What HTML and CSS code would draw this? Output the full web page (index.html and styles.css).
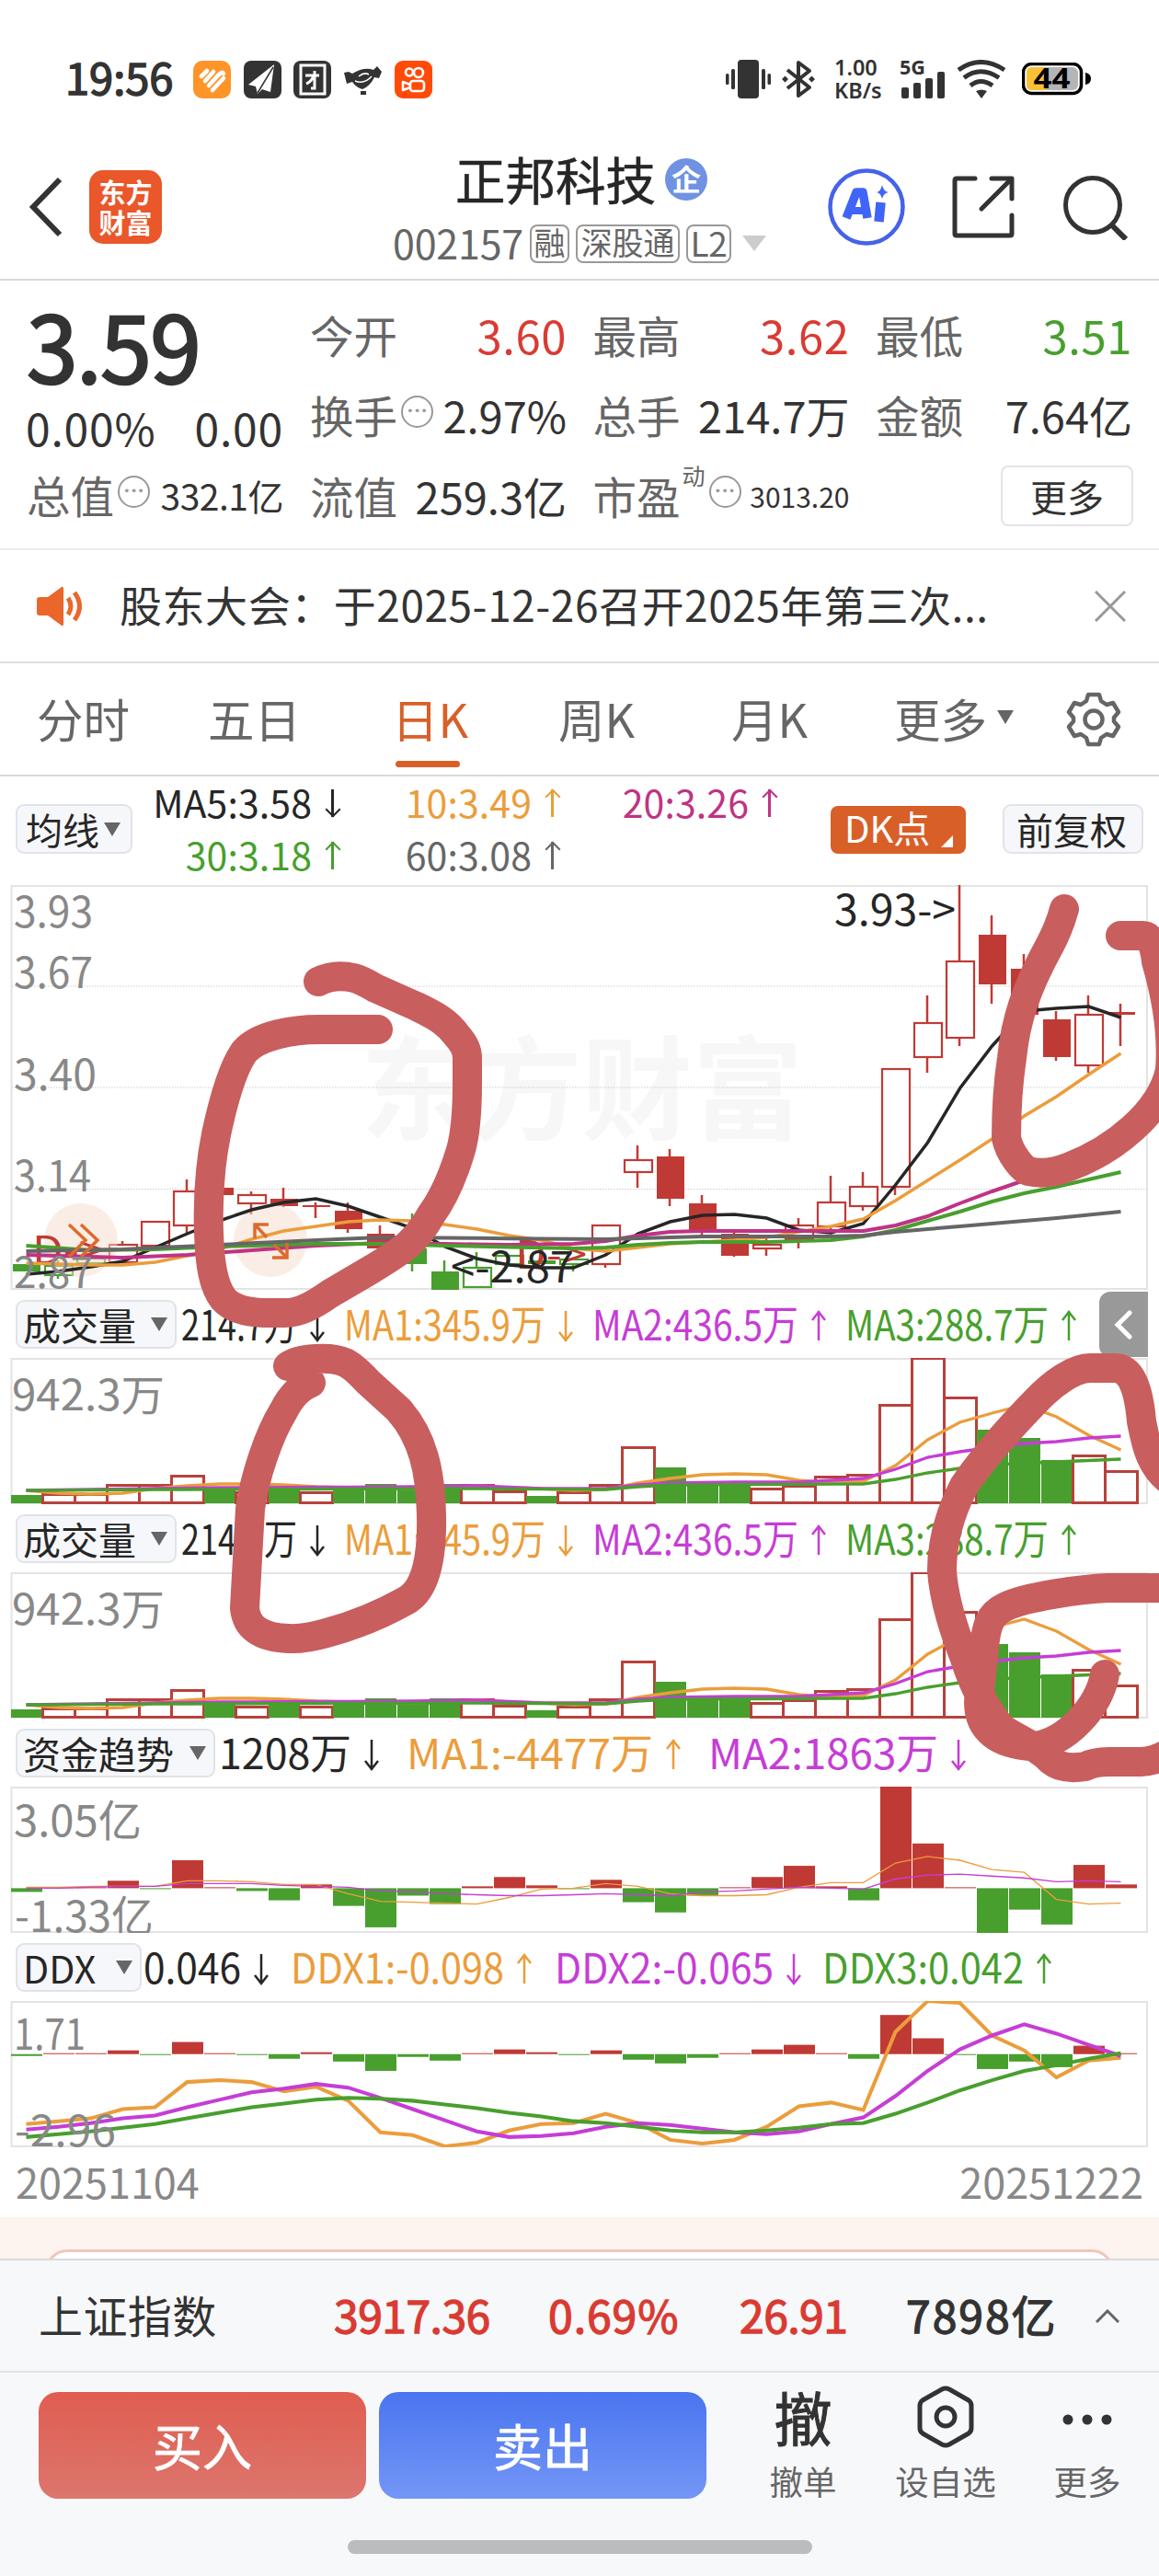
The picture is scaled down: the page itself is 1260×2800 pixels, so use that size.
FILE: index.html
```html
<!DOCTYPE html>
<html lang="zh-CN">
<head>
    <meta charset="UTF-8">
    <meta name="viewport" content="width=device-width, initial-scale=1.0">
    <title>正邦科技 002157</title>
    <link rel="stylesheet" href="styles.css">
</head>
<body>
<div class="page">
    <!-- status bar -->
    <div class="status">
        <span class="clock">19:56</span>
        <div class="status-apps">
            <svg class="app" viewBox="0 0 41 41"><rect width="41" height="41" rx="10" fill="#ff9429"/><g stroke="#fff" stroke-width="4.6" stroke-linecap="round" fill="none"><path d="M9 17 L15 11"/><path d="M13 22 L22 12"/><path d="M17 27 L27 16 Q32 11 33 14"/><path d="M21 32 L33 19"/></g></svg>
            <svg class="app" viewBox="0 0 41 41"><rect width="41" height="41" rx="8" fill="#333"/><path d="M33 4 L5 26 L13 28 L15 36 L20 31 L29 34 Z" fill="#fff"/><path d="M32 7 L15 35" stroke="#333" stroke-width="1.5"/></svg>
            <svg class="app" viewBox="0 0 41 41"><rect width="41" height="41" rx="8" fill="#333"/><rect x="8" y="5" width="26" height="31" fill="none" stroke="#fff" stroke-width="3"/><path d="M13 16 H28 M23 11 V30 H19 M22 17 Q19 23 14 25" fill="none" stroke="#fff" stroke-width="3"/></svg>
            <svg class="app" viewBox="0 0 41 41"><path d="M0 13 L5 12 L9 14 Q22 6 32 10 L36 6 L41 12 L38 19 L33 18 Q28 28 20 31 Q13 29 9 23 L3 25 Z M18 33 H24 V37 H18 Z" fill="#333"/><path d="M16 17 Q22 12 27 15 M12 22 Q22 26 30 17" fill="none" stroke="#fff" stroke-width="1.5"/></svg>
            <svg class="app" viewBox="0 0 41 41"><rect width="41" height="41" rx="9" fill="#ff4a08"/><g fill="none" stroke="#fff" stroke-width="2.6"><circle cx="16" cy="12.500" r="4"/><circle cx="26" cy="13" r="5"/><rect x="17" y="22" width="15" height="11" rx="3"/><path d="M17 26 L9 23 V32 L17 29" stroke-linejoin="round"/></g></svg>
        </div>
        <div class="status-right">
            <svg width="50" height="42" viewBox="0 0 50 42" fill="#333"><rect x="13" width="23" height="42" rx="4"/><rect x="6" y="10" width="4" height="22" rx="1.500"/><rect y="15" width="3.500" height="12" rx="1.500"/><rect x="39" y="10" width="4" height="22" rx="1.500"/><rect x="45.500" y="15" width="3.500" height="12" rx="1.500"/></svg>
            <svg class="bt" width="36" height="42" viewBox="0 0 36 42" fill="none" stroke="#333" stroke-width="4"><path d="M6 11 L30 30 L18 39 V3 L30 12 L6 31" stroke-linejoin="round"/><path d="M0 21 L3.500 17.500 L7 21 L3.500 24.500 Z M29 21 L32.500 17.500 L36 21 L32.500 24.500 Z" fill="#333" stroke="none"/></svg>
            <span class="speed">1.00<br>KB/s</span>
            <svg class="signal" width="50" height="42" viewBox="0 0 50 42" fill="#333"><text x="0" y="16" textLength="28" lengthAdjust="spacingAndGlyphs" class="sig-text">5G</text><rect x="2" y="30" width="8" height="12" rx="2"/><rect x="15" y="25" width="8" height="17" rx="2"/><rect x="28" y="20" width="8" height="22" rx="2"/><rect x="41" y="13" width="8" height="29" rx="2"/></svg>
            <svg class="wifi" width="54" height="42" viewBox="0 0 54 42" fill="none" stroke="#333" stroke-width="5"><path d="M2 11 Q26 -6 52 11"/><path d="M8 19.500 Q26 6 46 19.500"/><path d="M15 28 Q26 19 39 28"/><path d="M21 34 Q27 31 33 34 L27 42 Z" fill="#333" stroke="none"/></svg>
            <svg class="battery" width="75" height="36" viewBox="0 0 75 36"><rect x="1.500" y="1.500" width="63" height="32" rx="9" fill="#fff" stroke="#000" stroke-width="3.500"/><rect x="5" y="5" width="56" height="25" rx="6" fill="#b5b5b5"/><path d="M11 5 H27 V30 H11 Q5 30 5 24 V11 Q5 5 11 5 Z" fill="#f8c236"/><path d="M69 11 Q75 12 75 17.500 Q75 23 69 24 Z" fill="#000"/><text x="12.500" y="28" textLength="40" lengthAdjust="spacingAndGlyphs" class="bat-text">44</text></svg>
        </div>
    </div>

    <!-- title -->
    <header class="header">
        <div class="header-left">
            <svg width="40" height="66" viewBox="0 0 40 66"><path d="M35 3 L6 33 L35 63" fill="none" stroke="#333" stroke-width="6"/></svg>
            <div class="logo">东方<br>财富</div>
        </div>
        <div class="header-title">
            <div class="name">正邦科技<span class="badge">企</span></div>
            <div class="code">002157<span class="tag t1">融</span><span class="tag t3">深股通</span><span class="tag t2">L2</span><i class="tri-down"></i></div>
        </div>
        <div class="header-right">
            <svg class="ai" width="84" height="84" viewBox="0 0 84 84"><circle cx="42" cy="42" r="39.500" fill="none" stroke="#4562ea" stroke-width="4.500"/><path d="M20 54 L31 26 H38 L43 54" fill="none" stroke="#4164f8" stroke-width="9.500" stroke-linejoin="round"/><path d="M26 46 H41" stroke="#4164f8" stroke-width="8"/><path d="M57.500 37 L55.500 58" stroke="#4164f8" stroke-width="10.500"/><path d="M59 18 Q60.500 25 66 26 Q60.500 27 59 33 Q57.500 27 53 26 Q57.500 25 59 18 Z" fill="#4164f8"/></svg>
            <svg width="68" height="68" viewBox="0 0 68 68" fill="none" stroke="#333" stroke-width="5" stroke-linecap="round" stroke-linejoin="round"><path d="M25 3 H5 Q3 3 3 5 V63 Q3 65 5 65 H63 Q65 65 65 63 V43"/><path d="M43 3 H65 V25"/><path d="M64 4 L32 36"/></svg>
            <svg width="70" height="72" viewBox="0 0 70 72" fill="none" stroke="#333" stroke-width="5"><circle cx="32" cy="34" r="29.500"/><path d="M52 55 L68 71" stroke-width="6"/></svg>
        </div>
    </header>

    <!-- quote -->
    <section class="quote">
        <div class="quote-main">
            <div class="price">3.59</div>
            <div class="change"><span>0.00%</span><span>0.00</span></div>
            <div class="cell cap"><label>总值</label><i class="dots">•••</i><b class="sm">332.1亿</b></div>
        </div>
        <div class="quote-grid">
            <div class="cell"><label>今开</label><b class="red">3.60</b></div>
            <div class="cell"><label>最高</label><b class="red">3.62</b></div>
            <div class="cell"><label>最低</label><b class="green">3.51</b></div>
            <div class="cell"><label>换手</label><i class="dots">•••</i><b>2.97%</b></div>
            <div class="cell"><label>总手</label><b>214.7万</b></div>
            <div class="cell"><label>金额</label><b>7.64亿</b></div>
            <div class="cell"><label>流值</label><b>259.3亿</b></div>
            <div class="cell"><label>市盈</label><sup>动</sup><i class="dots">•••</i><b class="xs">3013.20</b></div>
            <div class="cell"><button class="more">更多</button></div>
        </div>
    </section>

    <div class="notice">
        <svg width="52" height="44" viewBox="0 0 52 44"><path d="M3 12 H12 L27 1 Q29 0 29 3 V41 Q29 44 27 43 L12 32 H3 Q0 32 0 29 V15 Q0 12 3 12 Z" fill="#eb662b"/><path d="M34 13 Q40 22 34 31 M41 7 Q52 22 41 37" fill="none" stroke="#eb662b" stroke-width="5"/></svg>
        <p>股东大会：于2025-12-26召开2025年第三次...</p>
        <svg width="34" height="34" viewBox="0 0 34 34"><path d="M1 1 L33 33 M33 1 L1 33" stroke="#999" stroke-width="3"/></svg>
    </div>

    <nav class="tabs">
        <a>分时</a><a>五日</a><a class="active">日K</a><a>周K</a><a>月K</a><a>更多<i class="tri"></i></a>
        <svg width="60" height="60" viewBox="0 0 60 60" fill="none" stroke="#666" stroke-width="4.500" stroke-linejoin="round"><path d="M24 3 H36 L38 10 L44 14 L51 12 L57 22 L52 28 V32 L57 38 L51 48 L44 46 L38 50 L36 57 H24 L22 50 L16 46 L9 48 L3 38 L8 32 V28 L3 22 L9 12 L16 14 L22 10 Z"/><circle cx="30" cy="30" r="9.500"/></svg>
    </nav>

    <div class="ma-bar">
        <span class="chip left">均线<i class="tri"></i></span>
        <div class="ma-list">
            <span class="c-dark">MA5:3.58<i class="arr down"></i></span>
            <span class="c-orange">10:3.49<i class="arr up"></i></span>
            <span class="c-pink">20:3.26<i class="arr up"></i></span>
            <span class="c-green">30:3.18<i class="arr up"></i></span>
            <span class="c-gray">60:3.08<i class="arr up"></i></span>
        </div>
        <span class="dk">DK点<i></i></span>
        <span class="chip right">前复权</span>
    </div>

    <!-- charts -->
    <svg class="chart" id="kline" height="440" viewBox="0 962 1260 440"></svg>

    <div class="ind-head">
        <span class="chip w175">成交量<i class="tri"></i></span>
        <svg class="vals" data-vals="199,123,dark,214.7万,down|376,216,orange,MA1:345.9万,down|646,221,purple,MA2:436.5万,up|921,218,green,MA3:288.7万,up"></svg>
        <span class="side"><svg width="20" height="32" viewBox="0 0 20 32"><path d="M17 3 L4 16 L17 29" fill="none" stroke="#fff" stroke-width="5" stroke-linecap="round"/></svg></span>
    </div>
    <svg class="chart" id="vol1" height="159" viewBox="0 1476 1260 159"></svg>

    <div class="ind-head">
        <span class="chip w175">成交量<i class="tri"></i></span>
        <svg class="vals" data-vals="199,123,dark,214.7万,down|376,216,orange,MA1:345.9万,down|646,221,purple,MA2:436.5万,up|921,218,green,MA3:288.7万,up"></svg>
    </div>
    <svg class="chart" id="vol2" height="159" viewBox="0 1476 1260 159"></svg>

    <div class="ind-head">
        <span class="chip w217">资金趋势<i class="tri"></i></span>
        <svg class="vals" data-vals="240,141,dark,1208万,down|444,265,orange,MA1:-4477万,up|772,247,purple,MA2:1863万,down"></svg>
    </div>
    <svg class="chart" id="fund" height="159" viewBox="0 1941 1260 157" preserveAspectRatio="none"></svg>

    <div class="ind-head">
        <span class="chip w137">DDX<i class="tri"></i></span>
        <svg class="vals" data-vals="158,103,dark,0.046,down|318,229,orange,DDX1:-0.098,up|605,235,purple,DDX2:-0.065,down|896,216,green,DDX3:0.042,up"></svg>
    </div>
    <svg class="chart" id="ddx" height="159" viewBox="0 2171 1260 157" preserveAspectRatio="none"></svg>

    <div class="dates"><span>20251104</span><span>20251222</span></div>
    <div class="promo"><div class="promo-card"></div></div>

    <!-- bottom -->
    <div class="index-row">
        <span class="idx-name">上证指数</span>
        <span class="idx red i1">3917.36</span>
        <span class="idx red i2">0.69%</span>
        <span class="idx red i3">26.91</span>
        <span class="idx i4">7898亿</span>
        <svg width="26" height="15" viewBox="0 0 26 15"><path d="M1 14 L13 2 L25 14" fill="none" stroke="#666" stroke-width="3"/></svg>
    </div>
    <div class="actions">
        <button class="buy">买入</button>
        <button class="sell">卖出</button>
        <div class="act a1"><span class="che">撤</span><em>撤单</em></div>
        <div class="act a2"><svg width="62" height="68" viewBox="0 0 62 68" fill="none" stroke="#333" stroke-width="5"><path d="M27 4 Q31 2 35 4 L56 16 Q59 18 59 22 V46 Q59 50 56 52 L35 64 Q31 66 27 64 L6 52 Q3 50 3 46 V22 Q3 18 6 16 Z"/><circle cx="31" cy="34" r="10"/></svg><em>设自选</em></div>
        <div class="act a3"><svg width="62" height="68" viewBox="0 0 62 68" fill="#333"><circle cx="10" cy="37" r="5.500"/><circle cx="31" cy="37" r="5.500"/><circle cx="52" cy="37" r="5.500"/></svg><em>更多</em></div>
    </div>
    <div class="home"></div>

    <!-- hand-drawn marks over the charts -->
    <svg class="marks" width="1260" height="1000" viewBox="0 960 1260 1000">
        <path d="M346 1067 Q363 1058 385 1063 C395 1066 401 1070 408 1074 L453 1094 C476 1105 487 1112 497 1126 Q508 1138 508 1150 L508 1177 Q508 1225 501 1250 C492 1280 480 1305 469 1320 C452 1350 440 1358 400 1382 L359 1406 C339 1420 325 1427 310 1427 L286 1427 C262 1426 250 1420 243 1412 C232 1398 228 1375 227 1340 Q225 1283 235 1233 C242 1200 252 1163 265 1144 C280 1125 320 1119 347 1119 H411"/>
        <path d="M313 1485 C325 1476 360 1474 375 1481 Q383 1484 400 1502 L433 1532 C460 1562 468 1600 469 1647 C470 1690 464 1728 441 1740 Q400 1763 355 1775 Q330 1782 314 1781 C282 1780 268 1768 266 1748 L272 1640 C277 1605 292 1560 308 1534 Q320 1510 338 1503"/>
        <path d="M1157 988 Q1152 1007 1141 1028 C1115 1075 1104 1110 1100 1150 Q1094 1190 1094 1237 C1098 1255 1112 1271 1118 1273 Q1138 1278 1163 1268 C1210 1250 1262 1210 1272 1163 Q1276 1110 1257 1045 Q1254 1017 1242 1017 H1218"/>
        <path d="M1275 1612 C1250 1595 1246 1570 1241 1545 C1238 1510 1230 1487 1212 1487 H1185 C1168 1487 1145 1503 1126 1523 C1095 1555 1065 1590 1048 1615 C1030 1650 1024 1680 1024 1707 C1026 1740 1038 1775 1049 1803 Q1062 1845 1089 1879 C1115 1895 1130 1900 1143 1914 Q1155 1924 1180 1920 Q1190 1915 1205 1915 H1240 Q1260 1914 1275 1902"/>
        <path d="M1275 1726 H1204 C1180 1727 1115 1735 1092 1747 C1075 1755 1072 1770 1070 1790 L1064 1850 C1064 1880 1085 1897 1125 1898 C1160 1893 1195 1855 1201 1820"/>
    </svg>
</div>
<script src="chart.js"></script>
</body>
</html>
```
FILE: styles.css
```css
* {
    box-sizing: border-box;
}
body {
    margin: 0;
    background: #fff;
    color: #333;
    font-family: "Noto Sans CJK SC", sans-serif;
}
i, em {
    font-style: normal;
}
button {
    font-family: inherit;
    padding: 0;
}
svg {
    display: block;
    flex: none;
}
.page {
    position: relative;
    width: 1260px;
    height: 2800px;
    overflow: hidden;
}

/* status bar */
.status {
    display: flex;
    align-items: center;
    height: 134px;
    padding: 38px 74px 0 71px;
}
.clock {
    width: 139px;
    font-size: 47px;
    line-height: 50px;
    margin-top: -7px;
    -webkit-text-stroke: 1.5px #333;
}
.status-apps {
    display: flex;
    gap: 13.7px;
}
.app {
    width: 41px;
    height: 41px;
}
.status-right {
    display: flex;
    align-items: center;
    margin-left: auto;
}
.bt {
    margin-left: 11px;
}
.speed {
    width: 53px;
    margin-left: 21px;
    font: 600 23.5px/25px "Noto Sans", sans-serif;
    white-space: nowrap;
}
.signal {
    margin-left: 18px;
    overflow: visible;
}
.sig-text {
    font: bold 22px "Noto Sans", sans-serif;
}
.wifi {
    margin-left: 12px;
}
.battery {
    margin-left: 17px;
}
.bat-text {
    font: bold 31px "Noto Sans", sans-serif;
}

/* header */
.header {
    display: grid;
    grid-template-columns: 1fr auto 1fr;
    height: 171px;
    border-bottom: 2px solid #d9d9d9;
}
.header-left {
    display: flex;
    align-items: center;
    padding: 12px 0 0 30px;
}
.logo {
    width: 79px;
    height: 80px;
    margin-left: 27px;
    padding-top: 7px;
    border-radius: 15px;
    background: #e9572b;
    color: #fff;
    font-size: 29px;
    line-height: 33px;
    font-weight: bold;
    text-align: center;
}
.header-title {
    padding-top: 25px;
}
.name {
    display: flex;
    align-items: center;
    justify-content: center;
    height: 68px;
    padding-left: 4px;
    font-size: 54.5px;
    color: #262626;
    -webkit-text-stroke: 0.6px #262626;
}
.badge {
    width: 46px;
    height: 46px;
    margin: 3px 0 0 10px;
    border-radius: 50%;
    background: #6f92e2;
    color: #fff;
    font-size: 32px;
    font-weight: bold;
    line-height: 42px;
    text-align: center;
    -webkit-text-stroke: 0;
}
.code {
    display: flex;
    align-items: center;
    justify-content: center;
    height: 72px;
    font-size: 43px;
    letter-spacing: -0.2px;
    color: #666;
}
.tag {
    height: 42px;
    margin: 4px 0 0 7px;
    border: 2px solid #999;
    border-radius: 8px;
    font-size: 34px;
    line-height: 34px;
    text-align: center;
}
.t1 { width: 43px; }
.t3 { width: 113px; }
.t2 { width: 49px; font-size: 37px; }
.tri-down {
    margin: 2px 0 0 12px;
    border: 13px solid transparent;
    border-top: 17px solid #ccc;
    border-bottom: 0;
}
.header-right {
    display: flex;
    align-items: center;
    justify-content: flex-end;
    gap: 53px;
    padding: 12px 34px 0 0;
}
.ai {
    margin-right: -2px;
}

/* quote */
.quote {
    display: flex;
    gap: 32px;
    height: 293px;
    padding: 15px 30px 0;
    border-bottom: 2px solid #ececec;
}
.quote-main {
    width: 276px;
}
.price {
    height: 107px;
    margin-left: -1px;
    font-size: 100px;
    line-height: 108px;
    letter-spacing: -1.5px;
    -webkit-text-stroke: 2.5px #333;
}
.change {
    display: flex;
    justify-content: space-between;
    height: 76px;
    margin: 0 -2px;
    font-size: 48px;
    line-height: 74px;
    letter-spacing: 0.8px;
}
.quote-grid {
    display: grid;
    grid-template-columns: repeat(3, 276px);
    grid-auto-rows: 87.5px;
    gap: 0 31.5px;
}
.cell {
    display: flex;
    align-items: center;
    line-height: 70px;
    white-space: nowrap;
}
.cell label {
    margin-left: -1px;
    font-size: 47.5px;
    color: #666;
}
.cell b {
    margin: 0 -2px 0 auto;
    font-size: 47px;
    font-weight: normal;
}
.cell .red, .cell .green {
    font-size: 49px;
    letter-spacing: 0.6px;
}
.cell b.sm {
    font-size: 39px;
    letter-spacing: -0.5px;
}
.cell b.xs {
    font-size: 30px;
    letter-spacing: 0;
}
.cell sup {
    align-self: flex-start;
    margin-left: 2px;
    color: #666;
    font-size: 25px;
    line-height: 42px;
}
.dots {
    width: 35px;
    height: 35px;
    margin: -8px 0 0 4px;
    border: 2.5px solid #999;
    border-radius: 50%;
    color: #999;
    font: 13px/29px "DejaVu Sans", sans-serif;
    letter-spacing: 0;
    text-align: center;
}
.red {
    color: #d93b33;
}
.green {
    color: #489f2e;
}
.more {
    width: 144px;
    height: 66px;
    margin: 0 -3px 0 auto;
    border: 2px solid #e4e4e8;
    border-radius: 8px;
    background: #fff;
    color: #333;
    font-size: 40px;
    line-height: 56px;
}

.notice {
    display: flex;
    align-items: center;
    height: 123px;
    padding: 0 36px 0 40px;
    border-bottom: 2px solid #dcdcdc;
}
.notice p {
    flex: 1;
    margin: -5px 0 0 38px;
    font-size: 46px;
    letter-spacing: 0.55px;
    white-space: nowrap;
}

/* period tabs */
.tabs {
    display: grid;
    grid-template-columns: 186px 200px 181px 188px 177px 187px 60px;
    align-items: center;
    height: 123px;
    padding-left: 40px;
    border-bottom: 2px solid #d9d9d9;
    font-size: 50.5px;
    color: #666;
}
.tabs a {
    position: relative;
    display: flex;
    align-items: center;
    height: 104px;
    line-height: 104px;
    padding-bottom: 4px;
}
.tabs .active {
    color: #d86028;
}
.tabs .active::after {
    content: "";
    position: absolute;
    left: 4px;
    bottom: 0;
    width: 70px;
    height: 7px;
    border-radius: 4px;
    background: #d86028;
}
.tri {
    border: 9px solid transparent;
    border-top: 15px solid #666;
    border-bottom: 0;
}
.tabs .tri {
    margin-left: 11px;
}

/* moving averages */
.ma-bar {
    display: flex;
    align-items: flex-start;
    height: 118px;
    padding: 0 17px;
}
.chip {
    display: flex;
    align-items: center;
    height: 54px;
    padding: 0 10px 0 9px;
    border: 2px solid #e0e3e8;
    border-radius: 9px;
    background: #f6f7fa;
    color: #262626;
    font-size: 40px;
    line-height: 46px;
    white-space: nowrap;
}
.ma-bar .chip {
    margin-top: 30px;
}
.ma-bar .tri {
    margin-left: 5px;
}
.chip.left {
    width: 127px;
}
.chip.right {
    width: 153px;
    margin-left: auto;
    padding-left: 13px;
}
.ma-list {
    display: grid;
    grid-template-columns: 225px 239px 236px;
    margin: -2px 0 0 0;
}
.ma-list span {
    display: flex;
    align-items: center;
    justify-content: flex-end;
    height: 57px;
    font-size: 41px;
    letter-spacing: 0.1px;
    white-space: nowrap;
}
.arr {
    position: relative;
    width: 16px;
    height: 30px;
    margin: 5px 0 0 14px;
}
.arr::before {
    content: "";
    position: absolute;
    left: 7px;
    width: 2.5px;
    height: 30px;
    background: currentColor;
}
.arr::after {
    content: "";
    position: absolute;
    left: 3px;
    width: 10px;
    height: 10px;
    border: solid currentColor;
    border-width: 2.5px 0 0 2.5px;
}
.arr.up::after {
    top: 2px;
    transform: rotate(45deg);
}
.arr.down::after {
    bottom: 2px;
    transform: rotate(225deg);
}
.c-dark { color: #262626; }
.c-orange { color: #eb9d3b; }
.c-pink { color: #bf3384; }
.c-green { color: #489f2e; }
.c-gray { color: #666; }
.dk {
    display: flex;
    width: 147px;
    height: 52px;
    margin: 32px 0 0 59px;
    padding-left: 15px;
    border-radius: 8px;
    background: #d95f28;
    color: #fff;
    font-size: 40px;
    line-height: 46px;
    white-space: nowrap;
}
.dk i {
    align-self: flex-end;
    margin: 0 0 7px 12px;
    border-left: 13px solid transparent;
    border-bottom: 13px solid #fff;
}

/* charts */
.chart {
    width: 1260px;
}
.axis {
    font-size: 46px;
    fill: #888;
}
.pointer {
    font-size: 46px;
    fill: #262626;
}
.watermark {
    font-size: 122px;
    font-weight: bold;
    fill: #f7f7f7;
}
.dmark {
    font-size: 42px;
    fill: #c03a35;
}
.ind-head {
    position: relative;
    display: flex;
    align-items: center;
    height: 74px;
    padding-left: 17px;
}
.ind-head .chip {
    height: 53px;
    padding-left: 6px;
    padding-right: 8px;
    justify-content: space-between;
    font-size: 41px;
    line-height: 44px;
}
.w175 { width: 175px; }
.w217 { width: 217px; }
.w137 { width: 137px; }
.vals {
    flex: 1;
    height: 74px;
}
.vals text {
    font-size: 45px;
}
.side {
    position: absolute;
    right: 12px;
    top: 2px;
    width: 53px;
    height: 71px;
    padding: 20px 0 0 16px;
    border-radius: 12px 0 0 12px;
    background: #999;
}
.dates {
    display: flex;
    justify-content: space-between;
    height: 76px;
    padding: 0 17px;
    font-size: 45px;
    line-height: 73px;
    color: #888;
}
.promo {
    height: 45px;
    padding: 35px 49px 0;
    background: #fdf3ef;
    overflow: hidden;
}
.promo-card {
    height: 60px;
    border: 3px solid #f1c6ba;
    border-radius: 24px;
    background: #fff;
}

/* bottom */
.index-row {
    display: flex;
    align-items: center;
    height: 124px;
    padding: 0 43px 0 42px;
    border-top: 2px solid #d9dadc;
    border-bottom: 2px solid #e3e4e6;
    background: #f7f8fa;
    font-size: 48px;
    white-space: nowrap;
}
.index-row span {
    margin-top: -4px;
}
.idx-name {
    width: 321px;
    letter-spacing: 0.4px;
}
.idx {
    letter-spacing: -0.5px;
    -webkit-text-stroke: 1.3px currentColor;
}
.i1 { width: 233px; }
.i2 { width: 208px; letter-spacing: 1px; }
.i3 { width: 181px; }
.i4 { width: 206px; letter-spacing: 2px; }
.actions {
    display: flex;
    height: 182px;
    padding: 21px 0 0 42px;
    background: #f7f8fa;
}
.buy, .sell {
    flex: none;
    width: 356px;
    height: 116px;
    margin-right: 14px;
    border: 0;
    border-radius: 21px;
    color: #fff;
    font-size: 54px;
    line-height: 108px;
    -webkit-text-stroke: 0.8px #fff;
}
.buy {
    background: linear-gradient(#e05d50, #dc766e);
}
.sell {
    background: linear-gradient(#4975ef, #7496f6);
}
.act {
    display: flex;
    flex-direction: column;
    align-items: center;
    flex: none;
    margin-top: -7px;
}
.act em {
    margin-top: 9px;
    font-size: 36.5px;
    line-height: 54px;
    color: #666;
    white-space: nowrap;
}
.che {
    height: 68px;
    font-size: 63px;
    line-height: 66px;
    -webkit-text-stroke: 1px #333;
}
.a1 { width: 182px; }
.a2 { width: 128px; }
.a3 { width: 168px; padding-left: 12px; }
.home {
    height: 40px;
    background: #f7f8fa;
}
.home::before {
    content: "";
    display: block;
    width: 505px;
    height: 15px;
    margin: 0 auto;
    border-radius: 8px;
    background: #bbbcbe;
}
.marks {
    position: absolute;
    left: 0;
    top: 960px;
    fill: none;
    stroke: #c95e5e;
    stroke-width: 32;
    stroke-linecap: round;
    stroke-linejoin: round;
}
```
FILE: chart.js
```js
const RED = '#c03a35', GREEN = '#489f2e', ORANGE = '#eb9d3b', PURPLE = '#c63dd6', PINK = '#bf3384', DARK = '#262626', GRAY = '#666';
const COLORS = { dark: DARK, orange: ORANGE, purple: PURPLE, green: GREEN };
const cx = n => 28 + 35 * n;

function line(ys, color, w = 4) {
    const pts = ys.map((y, n) => cx(n) + 0.5 + ',' + y).join(' ');
    return `<polyline points="${pts}" fill="none" stroke="${color}" stroke-width="${w}"/>`;
}
// sparse series: [index, y] pairs, filled in between
function spread(pairs) {
    const out = [];
    for (let k = 0; k < pairs.length - 1; k++) {
        const [a, ya] = pairs[k], [b, yb] = pairs[k + 1];
        for (let n = a; n < b; n++) out.push(ya + (yb - ya) * (n - a) / (b - a));
    }
    out.push(pairs[pairs.length - 1][1]);
    return out;
}
function frame(y, h) {
    return `<rect x="12.500" y="${y + 1}" width="1234.500" height="${h - 2}" fill="none" stroke="#e3e3e3" stroke-width="2"/>`;
}
function label(x, y, w, text, cls = 'axis') {
    return `<text x="${x}" y="${y}" class="${cls}" textLength="${w}" lengthAdjust="spacingAndGlyphs">${text}</text>`;
}

// type, body top, body bottom, high, low (r/g filled, R/G hollow)
const candles = [
    ['g',1374,1382,1374,1382],['G',1376,1386,1370,1390],['G',1368,1373,1366,1374],['R',1353,1372,1349,1372],['R',1328,1354,1328,1356],
    ['R',1295,1332,1282,1340],['r',1291,1299,1291,1299],['R',1299,1308,1295,1320],['r',1303,1311,1291,1312],['r',1310,1312,1307,1324],
    ['r',1316,1336,1307,1340],['r',1341,1357,1332,1357],['g',1357,1374,1319,1382],['g',1382,1402,1370,1402],['G',1378,1399,1361,1399],
    ['G',1365,1374,1365,1374],['g',1370,1374,1370,1374],['G',1369,1374,1367,1382],['R',1332,1374,1332,1378],['R',1261,1274,1245,1291],
    ['r',1257,1303,1249,1311],['r',1308,1339,1299,1343],['r',1341,1365,1336,1366],['R',1353,1357,1345,1365],['R',1332,1347,1324,1357],
    ['R',1307,1333,1278,1337],['R',1290,1311,1274,1316],['R',1162,1290,1162,1299],['R',1112,1149,1082,1166],['R',1045,1128,962,1137],
    ['r',1016,1070,995,1091],['r',1053,1103,1037,1103],['r',1108,1149,1099,1153],['R',1103,1158,1082,1166],['r',1100,1103,1091,1137]
];
let k = label(392, 1229, 481, '东方财富', 'watermark') + frame(962, 440);
[1072, 1182, 1292.5].forEach(y => k += `<path d="M13 ${y} H1247" stroke="#ccc" stroke-dasharray="1.5 1.5"/>`);
k += label(15, 1008, 86, '3.93') + label(15, 1074, 86, '3.67') + label(15, 1185, 90, '3.40') + label(15, 1295, 84, '3.14');
candles.forEach(([t, top, bot, hi, lo], n) => {
    const c = t.toLowerCase() === 'r' ? RED : GREEN, x = cx(n);
    if (hi < top) k += `<path d="M${x} ${hi} V${top}" stroke="${c}" stroke-width="2.5"/>`;
    if (lo > bot) k += `<path d="M${x} ${bot} V${lo}" stroke="${c}" stroke-width="2.5"/>`;
    k += t === 'r' || t === 'g'
        ? `<rect x="${x - 14}" y="${top}" width="30" height="${bot - top}" fill="${c}"/>`
        : `<rect x="${x - 14}" y="${top}" width="30" height="${bot - top}" fill="#fff" stroke="${c}" stroke-width="2.2"/>`;
});
k += '<g fill="#f6dccd" fill-opacity=".5"><circle cx="88" cy="1348" r="40"/><circle cx="294" cy="1348" r="40"/></g>';
k += label(35, 1374, 78, 'D-&gt;', 'dmark') + label(560, 1379, 78, 'D-&gt;', 'dmark');
k += line([1385,1382,1377,1371,1356,1341,1327,1315,1307,1303,1311,1323,1335,1355,1368,1375,1378,1378,1364,1341,1328,1321,1320,1324,1337,1340,1330,1288,1242,1183,1137,1099,1096,1094,1106], DARK, 3.5);
k += line([1373,1374,1375,1375,1372,1365,1358,1347,1338,1333,1328,1326,1327,1331,1336,1343,1348,1357,1360,1356,1352,1350,1348,1345,1339,1333,1325,1305,1283,1261,1238,1213,1192,1168,1145], ORANGE, 3.5);
k += line(spread([[0,1364],[3,1367],[5,1364],[7,1359],[9,1354],[11,1351],[15,1353],[17,1352],[18,1349],[19,1343],[20,1339],[21,1338],[26,1338],[27,1332],[28,1322],[29,1308],[30,1295],[31,1283],[34,1250]]), PINK);
k += line(spread([[0,1354],[2,1359],[4,1358],[6,1355],[9,1352],[11,1352],[13,1354],[17,1357],[18,1356],[19,1353],[20,1351],[21,1350],[23,1350],[25,1348],[26,1344],[27,1337],[28,1327],[29,1317],[30,1306],[31,1297],[32,1290],[34,1274]]), GREEN);
k += line(spread([[0,1360],[3,1358],[6,1353],[9,1348],[11,1345],[18,1347],[21,1344],[25,1344],[26,1343],[27,1339],[29,1333],[31,1327],[32,1324],[34,1317]]), GRAY);
k += '<g fill="none" stroke="#dd6a2c" stroke-width="3.5"><path d="M75 1331 L93 1348 L75 1366 M88 1331 L106 1348 L88 1366"/><path d="M277 1346 V1331 H292 M278 1332 L290 1345 M296 1367 H312 V1351 M298 1353 L311 1366"/></g>';
k += label(15, 1400, 86, '2.87') + label(907, 1006, 132, '3.93-&gt;', 'pointer') + label(490, 1394, 134, '&lt;-2.87', 'pointer');
document.getElementById('kline').innerHTML = k;

// volume: colour + height in px
const volume = 'g9 r10 r10 r20 r20 r30 g18 r12 g16 r12 g16 g21 g18 g21 r20 r13 g8 r12 r20 r61 g39 g22 g19 r16 r19 r29 r31 r107 r158 r115 g80 g71 g47 r52 r35'.split(' ');
let v = frame(1476, 159);
volume.forEach((s, n) => {
    const h = +s.slice(1), x = cx(n) - 16;
    v += s[0] === 'g'
        ? `<rect x="${x}" y="${1634 - h}" width="34" height="${h}" fill="${GREEN}"/>`
        : `<rect x="${x - 0.5}" y="${1634.5 - h}" width="35" height="${h - 1}" fill="#fff" stroke="#b8413c" stroke-width="3"/>`;
});
v += line([1620,1623,1624,1623,1618,1615,1613,1613,1614,1616,1617,1618,1618,1617,1615,1617,1618,1620,1619,1612,1607,1603,1602,1603,1609,1612,1610,1593,1565,1546,1536,1527,1540,1560,1576], ORANGE, 3.3);
v += line(spread([[0,1620],[4,1618],[6,1617],[12,1616],[14,1615],[16,1618],[18,1618],[19,1614],[20,1612],[22,1611],[24,1611],[26,1607],[27,1597],[28,1584],[29,1578],[30,1573],[31,1569],[32,1567],[33,1563],[34,1561]]), PURPLE, 3.3);
v += line(spread([[0,1620],[5,1619],[13,1618],[18,1619],[19,1616],[20,1614],[26,1613],[27,1608],[28,1601],[29,1596],[30,1592],[32,1589],[34,1586]]), GREEN, 3.3);
v += label(13, 1533, 166, '942.3万');
document.getElementById('vol1').innerHTML = v;
document.getElementById('vol2').innerHTML = v;

function bars(vals, zero) {
    return vals.map((h, n) => `<rect x="${cx(n) - 16}" y="${h > 0 ? zero - h : zero}" width="34" height="${Math.abs(h)}" fill="${h > 0 ? RED : GREEN}"/>`).join('');
}
document.getElementById('fund').innerHTML = frame(1941, 157)
    + bars([-4,1,1,8,-1,30,1,-3,-13,4,-19,-42,-8,-17,2,12,3,-1,9,-15,-26,-8,1,12,24,2,-13,109,48,1,-48,-23,-39,25,4], 2050)
    + line([2049,2049,2048,2048,2048,2042,2042,2043,2046,2046,2056,2064,2065,2066,2067,2060,2051,2050,2045,2048,2056,2058,2058,2057,2049,2044,2044,2023,2016,2020,2030,2033,2062,2067,2066], ORANGE, 1.3)
    + line([2050,2050,2049,2048,2048,2045,2045,2045,2047,2048,2049,2053,2054,2056,2057,2058,2058,2057,2056,2057,2058,2054,2053,2051,2049,2050,2051,2040,2036,2035,2037,2039,2043,2042,2043], PURPLE, 1.3)
    + label(15, 1994, 139, '3.05亿') + label(16, 2097, 151, '-1.33亿');
document.getElementById('ddx').innerHTML = frame(2171, 157)
    + bars([-2,1,1,4,-1,13,1,-1,-5,2,-8,-18,-3,-7,1,5,2,-1,4,-6,-10,-4,1,5,10,1,-5,42,17,-1,-16,-8,-14,9,1], 2228)
    + line([2303,2300,2297,2287,2285,2258,2256,2258,2268,2263,2278,2312,2315,2327,2323,2310,2303,2302,2292,2302,2320,2324,2320,2306,2284,2280,2288,2204,2171,2173,2208,2224,2253,2235,2232], ORANGE)
    + line([2309,2306,2302,2297,2294,2285,2277,2269,2265,2260,2264,2275,2287,2299,2311,2317,2316,2313,2306,2302,2304,2308,2312,2314,2311,2303,2296,2273,2246,2223,2208,2196,2206,2218,2230], PURPLE)
    + line([2317,2314,2311,2307,2303,2297,2291,2285,2281,2277,2275,2276,2278,2282,2286,2291,2295,2300,2302,2306,2310,2312,2312,2310,2307,2303,2302,2292,2280,2267,2256,2246,2240,2233,2227], GREEN)
    + label(15, 2223, 78, '1.71') + label(16, 2327, 110, '-2.96');

// indicator values next to the dropdowns
document.querySelectorAll('.vals').forEach(svg => {
    const left = svg.getBoundingClientRect().left;
    svg.innerHTML = svg.dataset.vals.split('|').map(item => {
        const [x, w, color, text, dir] = item.split(',');
        const x0 = x - left, ax = x0 + +w + 23;
        const head = dir === 'up' ? `M${ax - 7} 33 L${ax} 24 L${ax + 7} 33` : `M${ax - 7} 46 L${ax} 55 L${ax + 7} 46`;
        return `<text x="${x0 - 2}" y="55" fill="${COLORS[color]}" textLength="${+w + 3}" lengthAdjust="spacingAndGlyphs">${text}</text>`
            + `<path d="M${ax} 23 V55 ${head}" fill="none" stroke="${COLORS[color]}" stroke-width="2.5"/>`;
    }).join('');
});
```
